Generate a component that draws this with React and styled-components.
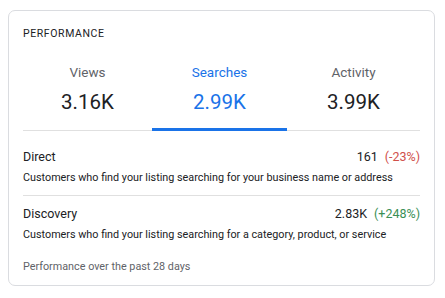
import React from "react";
import styled, { createGlobalStyle } from "styled-components";

const GlobalStyle = createGlobalStyle`
  body {
    margin: 0;
    background: #ffffff;
    font-family: Roboto, "Liberation Sans", sans-serif;
  }
`;

const tabs = [
  { label: "Views", value: "3.16K" },
  { label: "Searches", value: "2.99K", active: true },
  { label: "Activity", value: "3.99K" },
];

const rows = [
  {
    title: "Direct",
    value: "161",
    change: "(-23%)",
    down: true,
    text: "Customers who find your listing searching for your business name or address",
  },
  {
    title: "Discovery",
    value: "2.83K",
    change: "(+248%)",
    text: "Customers who find your listing searching for a category, product, or service",
  },
];

const App = () => {
  return (
    <>
      <GlobalStyle />
      <Page>
        <Card>
          <Heading>PERFORMANCE</Heading>
          <TabBar>
            {tabs.map((t) => (
              <Tab key={t.label} $active={t.active}>
                <TabLabel $active={t.active}>{t.label}</TabLabel>
                <TabValue $active={t.active}>{t.value}</TabValue>
              </Tab>
            ))}
          </TabBar>
          <RowList>
            {rows.map((r) => (
              <Row key={r.title}>
                <RowHead>
                  <span>{r.title}</span>
                  <RowStat>
                    {r.value}
                    <Change $down={r.down}>{r.change}</Change>
                  </RowStat>
                </RowHead>
                <RowText>{r.text}</RowText>
              </Row>
            ))}
          </RowList>
          <Footer>Performance over the past 28 days</Footer>
        </Card>
      </Page>
    </>
  );
};

export default App;

const Page = styled.div`
  padding: 10px 10px 12px 8px;
`;

const Card = styled.div`
  width: 427px;
  box-sizing: border-box;
  border: 1px solid #dadce0;
  border-radius: 7px;
  padding: 16px 14px 11px 14px;
`;

const Heading = styled.div`
  font-size: 10.5px;
  letter-spacing: 0.6px;
  color: #202124;
  line-height: 14px;
`;

const TabBar = styled.div`
  display: grid;
  grid-template-columns: 129px 135px 1fr;
  margin-top: 22px;
  border-bottom: 1px solid #e0e0e0;
`;

const Tab = styled.div`
  display: flex;
  flex-direction: column;
  align-items: center;
  padding-bottom: 13px;
  margin-bottom: -1px;
  border-bottom: 3px solid ${(p) => (p.$active ? "#1a73e8" : "transparent")};
`;

const TabLabel = styled.div`
  font-size: 13.5px;
  line-height: 18px;
  color: ${(p) => (p.$active ? "#1a73e8" : "#5f6368")};
`;

const TabValue = styled.div`
  font-size: 20.5px;
  line-height: 26px;
  margin-top: 8px;
  color: ${(p) => (p.$active ? "#1a73e8" : "#202124")};
`;

const RowList = styled.div`
  display: flex;
  flex-direction: column;
`;

const Row = styled.div`
  padding: 18px 0 10px;
  & + & {
    border-top: 1px solid #e0e0e0;
    padding-top: 10px;
  }
`;

const RowHead = styled.div`
  display: flex;
  justify-content: space-between;
  align-items: baseline;
  font-size: 12.5px;
  line-height: 16px;
  color: #202124;
`;

const RowStat = styled.span`
  display: flex;
  gap: 7px;
`;

const Change = styled.span`
  color: ${(p) => (p.$down ? "#d0504a" : "#3a8f55")};
`;

const RowText = styled.div`
  margin-top: 6px;
  font-size: 10.8px;
  line-height: 14px;
  color: #202124;
`;

const Footer = styled.div`
  margin-top: 8px;
  font-size: 10.8px;
  line-height: 14px;
  color: #5f6368;
`;
